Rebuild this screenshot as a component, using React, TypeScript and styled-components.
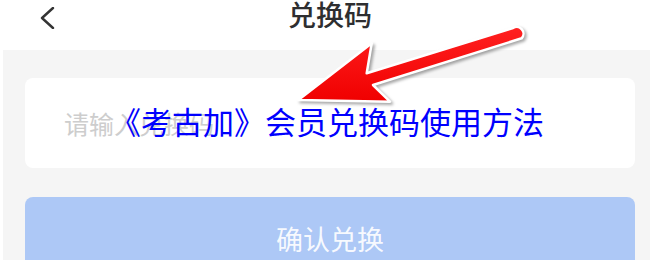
import styled, { createGlobalStyle } from "styled-components";

const GlobalStyle = createGlobalStyle`
  html, body {
    margin: 0;
    padding: 0;
    background: #ffffff;
    overflow: hidden;
  }
  body {
    font-family: "Noto Sans CJK SC", "Noto Sans", sans-serif;
  }
`;

const Page = styled.div`
  position: relative;
  width: 650px;
  height: 260px;
  overflow: hidden;
  background: #ffffff;
`;

const Header = styled.header`
  display: grid;
  grid-template-columns: 1fr auto 1fr;
  align-items: start;
  height: 50px;
  padding-left: 10px;
  box-sizing: border-box;
  background: #ffffff;
`;

const BackButton = styled.button`
  justify-self: start;
  display: flex;
  padding: 7px 0 0 30px;
  border: none;
  background: none;
  color: #333333;
  cursor: pointer;
`;

const Title = styled.h1`
  margin: 0;
  font-size: 28px;
  line-height: 28px;
  font-weight: 500;
  color: #2e2e30;
`;

const Content = styled.main`
  display: flex;
  flex-direction: column;
  gap: 29px;
  height: 210px;
  margin-left: 3px;
  padding: 28px 15px 0 22px;
  background: #f5f5f5;
`;

const InputCard = styled.div`
  display: flex;
  align-items: center;
  height: 90px;
  padding-left: 37px;
  border-radius: 8px;
  background: #ffffff;
`;

const CodeInput = styled.input`
  flex: 1;
  border: none;
  outline: none;
  background: transparent;
  font-family: inherit;
  font-size: 25px;
  color: #333333;

  &::placeholder {
    color: #cdcdcd;
  }
`;

const ConfirmButton = styled.button`
  display: flex;
  align-items: center;
  justify-content: center;
  flex-shrink: 0;
  height: 82px;
  border: none;
  border-radius: 8px;
  background: #adc8f6;
  color: rgba(255, 255, 255, 0.92);
  font-family: inherit;
  font-size: 27px;
  padding: 0;
`;

const Caption = styled.div`
  position: absolute;
  left: 110px;
  top: 105px;
  font-size: 31px;
  line-height: 31px;
  color: #0000fe;
  white-space: nowrap;
`;

const Arrow = styled.svg`
  position: absolute;
  left: 280px;
  top: 15px;
  filter: drop-shadow(2px 2px 1.5px rgba(0, 0, 0, 0.35));
`;

export default function App() {
  return (
    <Page>
      <GlobalStyle />
      <Header>
        <BackButton aria-label="返回">
          <svg width="16" height="22" viewBox="0 0 16 22" fill="none">
            <polyline
              points="13,1 2,11 13,21"
              stroke="currentColor"
              strokeWidth="2.4"
              strokeLinecap="round"
              strokeLinejoin="round"
            />
          </svg>
        </BackButton>
        <Title>兑换码</Title>
      </Header>
      <Content>
        <InputCard>
          <CodeInput placeholder="请输入兑换码" />
        </InputCard>
        <ConfirmButton>确认兑换</ConfirmButton>
      </Content>

      <Caption>《考古加》会员兑换码使用方法</Caption>

      <Arrow width="255" height="100" viewBox="280 15 255 100">
        <defs>
          <linearGradient id="arrowRed" x1="0" y1="0" x2="0" y2="1">
            <stop offset="0" stopColor="#ff2020" />
            <stop offset="1" stopColor="#f00000" />
          </linearGradient>
        </defs>
        <path
          d="M 513 28 A 6.8 6.8 0 0 1 521.7 38.3 L 373 85 L 390 101.7 L 298.3 100 L 371.7 43.3 L 366.7 73.3 Z"
          fill="url(#arrowRed)"
          stroke="#ffffff"
          strokeWidth="2.5"
          strokeLinejoin="round"
        />
      </Arrow>
    </Page>
  );
}
